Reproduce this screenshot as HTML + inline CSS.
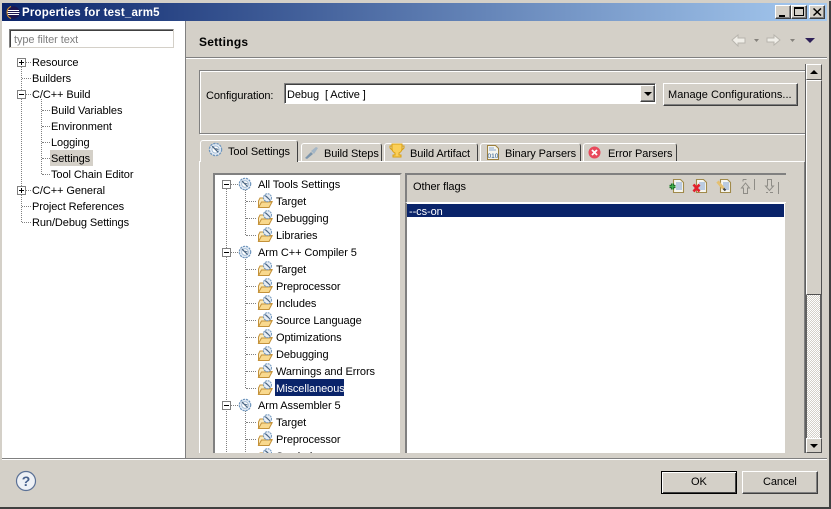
<!DOCTYPE html>
<html><head><meta charset="utf-8">
<style>
html,body{margin:0;padding:0;width:831px;height:509px;overflow:hidden;background:#d4d0c8}
body{position:relative;font:11px/13px "Liberation Sans",sans-serif;color:#000}
div,span,svg{position:absolute;box-sizing:border-box}
.t{white-space:nowrap;letter-spacing:-.08px;height:14px;line-height:14px;margin-top:1px}
.b{background:#d4d0c8;border:1px solid;border-color:#fff #404040 #404040 #fff;box-shadow:inset -1px -1px 0 #808080}
.tab{border:1px solid;border-color:#fff #404040 transparent #fff;border-bottom:0;border-radius:3px 3px 0 0;background:#d4d0c8}
.d{border-left:1px dotted #808080}
.h{border-top:1px dotted #808080;height:1px}
.x{width:9px;height:9px;border:1px solid #808080;background:#fff}
.x:before{content:"";position:absolute;left:1px;top:3px;width:5px;height:1px;background:#000}
.p:after{content:"";position:absolute;left:3px;top:1px;width:1px;height:5px;background:#000}
.tri{width:0;height:0;border-style:solid;border-width:4px 4px 0 4px;border-color:#000 transparent transparent transparent}
.triu{width:0;height:0;border-style:solid;border-width:0 4px 4px 4px;border-color:transparent transparent #000 transparent}
</style></head><body>
<svg width="0" height="0" style="left:0;top:0"><defs>
<symbol id="g" viewBox="0 0 16 16"><circle cx="8" cy="8" r="6.5" fill="#e6edf6" stroke="#6f96bd" stroke-width="1.4" stroke-dasharray="2.5 1"/><circle cx="8" cy="8" r="3.8" fill="#fff" stroke="#9db8d2"/><path d="M4.5 4.500L11 11" stroke="#4a6582" stroke-width="1.400"/><path d="M8 7l3 1" stroke="#4a6582"/></symbol>
<symbol id="f" viewBox="0 0 16 16"><path d="M1.500 8v6.500h10.500l3-6h-3V6H7.500L6.500 5H3z" fill="#fbe9b8" stroke="#c4923a"/><path d="M1.500 14.500l3-5.500h10.500l-3 5.500z" fill="#f9d98e" stroke="#c4923a"/><circle cx="10.500" cy="4.700" r="4" fill="#e6edf6" stroke="#6f96bd" stroke-dasharray="2 .7"/><path d="M8 2.500l5 4.500M9 3l3 3" stroke="#4a6582"/></symbol>
<symbol id="doc" viewBox="0 0 16 16"><path d="M4.500 1.500h7l3 3v10h-10z" fill="#f6f6f0" stroke="#a08a4a" stroke-width="1.100"/><path d="M7 5h6M7 7h6M7 9h6M7 11h6" stroke="#7ea0cf"/></symbol>
</defs></svg>

<!-- title -->
<div style="left:2px;top:3px;width:825px;height:18px;background:linear-gradient(90deg,#0a246a,#a6caf0)"></div>
<svg style="left:6px;top:5px" width="15" height="15" viewBox="0 0 15 15"><circle cx="7.500" cy="7.500" r="6.200" fill="#1c1650"/><path d="M2 5.500h11M1.500 7.500h12M2 9.500h11" stroke="#fff" stroke-width="1"/><path d="M5 1.500A6.500 6.500 0 0 0 5 13.500" stroke="#e09a30" fill="none"/></svg>
<div class="t" style="left:22px;top:5px;color:#fff;font-weight:bold;font-size:11.500px;letter-spacing:.2px">Properties for test_arm5</div>
<div class="b" style="left:775px;top:5px;width:16px;height:14px"><div style="left:3px;top:9px;width:6px;height:2px;background:#000"></div></div>
<div class="b" style="left:791px;top:5px;width:16px;height:14px"><div style="left:2px;top:1px;width:10px;height:9px;border:1px solid #000;border-top-width:2px"></div></div>
<div class="b" style="left:809px;top:5px;width:16px;height:14px"><svg style="left:3px;top:2px" width="9" height="8"><path d="M0.500 0.500L8 7.500M8 0.500L0.500 7.500" stroke="#000" stroke-width="1.500"/></svg></div>

<!-- left panel -->
<div style="left:2px;top:21px;width:183px;height:437px;background:#fff"></div>
<div style="left:185px;top:21px;width:1px;height:437px;background:#808080"></div>
<div style="left:9px;top:29px;width:165px;height:19px;background:#fff;border:1px solid;border-color:#808080 #d4d0c8 #d4d0c8 #808080;box-shadow:inset 1px 1px 0 #404040"></div>
<div class="t" style="left:14px;top:32px;color:#7f7f7f">type filter text</div>

<div class="d" style="left:21px;top:67px;height:155px"></div>
<div class="d" style="left:41px;top:99px;height:75px"></div>
<div class="h" style="left:26px;top:62px;width:5px"></div><div class="h" style="left:22px;top:78px;width:9px"></div><div class="h" style="left:26px;top:94px;width:5px"></div>
<div class="h" style="left:42px;top:110px;width:8px"></div><div class="h" style="left:42px;top:126px;width:8px"></div><div class="h" style="left:42px;top:142px;width:8px"></div><div class="h" style="left:42px;top:158px;width:8px"></div><div class="h" style="left:42px;top:174px;width:8px"></div>
<div class="h" style="left:26px;top:190px;width:5px"></div><div class="h" style="left:22px;top:206px;width:9px"></div><div class="h" style="left:22px;top:222px;width:9px"></div>
<div class="x p" style="left:17px;top:58px"></div><div class="x" style="left:17px;top:90px"></div><div class="x p" style="left:17px;top:186px"></div>
<div style="left:50px;top:150px;width:43px;height:16px;background:#d4d0c8"></div>
<div class="t" style="left:32px;top:55px">Resource</div>
<div class="t" style="left:32px;top:71px">Builders</div>
<div class="t" style="left:32px;top:87px">C/C++ Build</div>
<div class="t" style="left:51px;top:103px">Build Variables</div>
<div class="t" style="left:51px;top:119px">Environment</div>
<div class="t" style="left:51px;top:135px">Logging</div>
<div class="t" style="left:51px;top:151px">Settings</div>
<div class="t" style="left:51px;top:167px">Tool Chain Editor</div>
<div class="t" style="left:32px;top:183px">C/C++ General</div>
<div class="t" style="left:32px;top:199px">Project References</div>
<div class="t" style="left:32px;top:215px">Run/Debug Settings</div>

<!-- header -->
<div class="t" style="left:199px;top:34px;font-weight:bold;font-size:12px;letter-spacing:.25px">Settings</div>
<div style="left:186px;top:57px;width:641px;height:1px;background:#808080"></div>
<div style="left:186px;top:58px;width:641px;height:1px;background:#fff"></div>
<svg style="left:731px;top:33px" width="90" height="14" viewBox="0 0 90 14"><path d="M1 7l6-5v3h7v5H7v3z" fill="#f0eee8" stroke="#b8b5ae"/><path d="M36 5h7v-3l6 5-6 5v-3h-7z" fill="#f0eee8" stroke="#b8b5ae"/><path d="M23 6h5l-2.500 3z" fill="#85827c"/><path d="M59 6h5l-2.500 3z" fill="#85827c"/><path d="M74 5h10l-5 5z" fill="#2e2058"/></svg>

<!-- config group -->
<div style="left:199px;top:70px;width:607px;height:64px;border:1px solid #808080;box-shadow:1px 1px 0 #fff,inset 1px 1px 0 #fff"></div>
<div class="t" style="left:206px;top:88px">Configuration:</div>
<div style="left:284px;top:83px;width:372px;height:21px;background:#fff;border:1px solid;border-color:#808080 #fff #fff #808080;box-shadow:inset 1px 1px 0 #404040"></div>
<div class="t" style="left:287px;top:87px;white-space:pre">Debug  [ Active ]</div>
<div class="b" style="left:640px;top:85px;width:15px;height:17px"><div class="tri" style="left:3px;top:6px"></div></div>
<div class="b" style="left:663px;top:83px;width:135px;height:23px"></div>
<div class="t" style="left:668px;top:87px;letter-spacing:.03px">Manage Configurations...</div>

<!-- tab folder -->
<div style="left:199px;top:161px;width:607px;height:297px;border-top:1px solid #fff;border-left:1px solid #fff;border-right:2px solid #808080"></div>
<div class="tab" style="left:200px;top:140px;width:98px;height:22px"></div>
<div class="tab" style="left:301px;top:143px;width:81px;height:18px"></div>
<div class="tab" style="left:384px;top:143px;width:94px;height:18px"></div>
<div class="tab" style="left:480px;top:143px;width:101px;height:18px"></div>
<div class="tab" style="left:583px;top:143px;width:94px;height:18px"></div>
<svg style="left:208px;top:142px" width="15" height="15"><use href="#g"/></svg>
<div class="t" style="left:228px;top:144px">Tool Settings</div>
<svg style="left:304px;top:145px" width="15" height="15" viewBox="0 0 15 15"><path d="M1 13l6-6 2 2-6 5z" fill="#7d96ad"/><path d="M7 6l5-4 2 1-4 6z" fill="#a4b6c6"/></svg>
<div class="t" style="left:324px;top:146px">Build Steps</div>
<svg style="left:389px;top:143px" width="16" height="16" viewBox="0 0 16 16"><path d="M3 1h10v5a5 5 0 0 1-3 4v2h2v2H4v-2h2v-2a5 5 0 0 1-3-4z" fill="#fbcf58" stroke="#d9a013"/><path d="M3 3H1v2l2 2M13 3h2v2l-2 2" fill="none" stroke="#d9a013"/></svg>
<div class="t" style="left:410px;top:146px">Build Artifact</div>
<svg style="left:486px;top:145px" width="14" height="15" viewBox="0 0 14 15"><path d="M1.500.5h8l3 3v11h-11z" fill="#f5f5ee" stroke="#9c7f3c"/><path d="M3 3h5M3 5h7" stroke="#8aa6cf"/><text x="1.500" y="13" font-size="6.500" font-family="Liberation Sans" fill="#1f4f87">010</text></svg>
<div class="t" style="left:505px;top:146px">Binary Parsers</div>
<svg style="left:588px;top:146px" width="13" height="13" viewBox="0 0 13 13"><circle cx="6.500" cy="6.500" r="6" fill="#e84a5c"/><path d="M4 4l5 5M9 4l-5 5" stroke="#fff" stroke-width="1.800"/></svg>
<div class="t" style="left:608px;top:146px">Error Parsers</div>

<!-- tree box -->
<div style="left:213px;top:173px;width:189px;height:285px;background:#fff;border-top:2px solid #808080;border-left:2px solid #808080;border-right:2px solid #d4d0c8"></div>
<div class="d" style="left:226px;top:188px;height:270px"></div>
<div class="d" style="left:245px;top:188px;height:47px"></div>
<div class="d" style="left:245px;top:256px;height:132px"></div>
<div class="d" style="left:245px;top:409px;height:49px"></div>
<div class="h" style="left:231px;top:184px;width:7px"></div><div class="h" style="left:231px;top:252px;width:7px"></div><div class="h" style="left:231px;top:405px;width:7px"></div>
<div class="x" style="left:222px;top:180px"></div><div class="x" style="left:222px;top:248px"></div><div class="x" style="left:222px;top:401px"></div>
<svg style="left:238px;top:177px" width="14" height="14"><use href="#g"/></svg>
<svg style="left:238px;top:245px" width="14" height="14"><use href="#g"/></svg>
<svg style="left:238px;top:398px" width="14" height="14"><use href="#g"/></svg>
<div class="h" style="left:246px;top:201px;width:10px"></div><div class="h" style="left:246px;top:218px;width:10px"></div><div class="h" style="left:246px;top:235px;width:10px"></div>
<div class="h" style="left:246px;top:269px;width:10px"></div><div class="h" style="left:246px;top:286px;width:10px"></div><div class="h" style="left:246px;top:303px;width:10px"></div><div class="h" style="left:246px;top:320px;width:10px"></div><div class="h" style="left:246px;top:337px;width:10px"></div><div class="h" style="left:246px;top:354px;width:10px"></div><div class="h" style="left:246px;top:371px;width:10px"></div><div class="h" style="left:246px;top:388px;width:10px"></div>
<div class="h" style="left:246px;top:422px;width:10px"></div><div class="h" style="left:246px;top:439px;width:10px"></div>
<svg style="left:257px;top:193px" width="16" height="16"><use href="#f"/></svg>
<svg style="left:257px;top:210px" width="16" height="16"><use href="#f"/></svg>
<svg style="left:257px;top:227px" width="16" height="16"><use href="#f"/></svg>
<svg style="left:257px;top:261px" width="16" height="16"><use href="#f"/></svg>
<svg style="left:257px;top:278px" width="16" height="16"><use href="#f"/></svg>
<svg style="left:257px;top:295px" width="16" height="16"><use href="#f"/></svg>
<svg style="left:257px;top:312px" width="16" height="16"><use href="#f"/></svg>
<svg style="left:257px;top:329px" width="16" height="16"><use href="#f"/></svg>
<svg style="left:257px;top:346px" width="16" height="16"><use href="#f"/></svg>
<svg style="left:257px;top:363px" width="16" height="16"><use href="#f"/></svg>
<svg style="left:257px;top:380px" width="16" height="16"><use href="#f"/></svg>
<svg style="left:257px;top:414px" width="16" height="16"><use href="#f"/></svg>
<svg style="left:257px;top:431px" width="16" height="16"><use href="#f"/></svg>
<svg style="left:257px;top:448px" width="16" height="16"><use href="#f"/></svg>
<div style="left:275px;top:379px;width:69px;height:17px;background:#0a246a"></div>
<div class="t" style="left:258px;top:177px">All Tools Settings</div>
<div class="t" style="left:276px;top:194px">Target</div>
<div class="t" style="left:276px;top:211px">Debugging</div>
<div class="t" style="left:276px;top:228px">Libraries</div>
<div class="t" style="left:258px;top:245px">Arm C++ Compiler 5</div>
<div class="t" style="left:276px;top:262px">Target</div>
<div class="t" style="left:276px;top:279px">Preprocessor</div>
<div class="t" style="left:276px;top:296px">Includes</div>
<div class="t" style="left:276px;top:313px">Source Language</div>
<div class="t" style="left:276px;top:330px">Optimizations</div>
<div class="t" style="left:276px;top:347px">Debugging</div>
<div class="t" style="left:276px;top:364px">Warnings and Errors</div>
<div class="t" style="left:276px;top:381px;color:#fff">Miscellaneous</div>
<div class="t" style="left:258px;top:398px">Arm Assembler 5</div>
<div class="t" style="left:276px;top:415px">Target</div>
<div class="t" style="left:276px;top:432px">Preprocessor</div>
<div class="t" style="left:276px;top:449px">Symbols</div>

<!-- flags panel -->
<div style="left:405px;top:173px;width:381px;height:30px;border-top:2px solid #808080;border-left:2px solid #808080;border-bottom:1px solid #fff;background:#d4d0c8"></div>
<div style="left:405px;top:203px;width:381px;height:255px;background:#fff;border-left:2px solid #808080;border-right:1px solid #d4d0c8"></div>
<div class="t" style="left:413px;top:179px">Other flags</div>
<div style="left:407px;top:204px;width:377px;height:13px;background:#0a246a"></div>
<div class="t" style="left:409px;top:204px;color:#fff;height:13px;line-height:14px">--cs-on</div>
<svg style="left:669px;top:178px" width="16" height="16"><use href="#doc"/><path d="M3.500 5.500v6M.5 8.500h6" stroke="#14501f" stroke-width="3.200"/><path d="M3.500 5.500v6M.5 8.500h6" stroke="#3fae4a" stroke-width="1.600"/></svg>
<svg style="left:692px;top:178px" width="16" height="16"><use href="#doc"/><path d="M1.500 6.500l6 7M7.500 6.500l-6 7" stroke="#e3202c" stroke-width="2.600"/></svg>
<svg style="left:716px;top:178px" width="16" height="16"><use href="#doc"/><path d="M1.500 3.500L7.500 10.500" stroke="#e5c070" stroke-width="3"/><path d="M7.500 10.500l2 2" stroke="#404040" stroke-width="2"/></svg>
<svg style="left:740px;top:178px" width="17" height="17" viewBox="0 0 17 17" fill="none" stroke="#8e8c86"><path d="M5.500 5L1.500 10H3.500V15.500H7.500V10H9.500Z"/><path d="M3 1.500H6.500M3 1.500V3.500"/><path d="M14.500 1V12"/></svg>
<svg style="left:764px;top:178px" width="17" height="17" viewBox="0 0 17 17" fill="none" stroke="#8e8c86"><path d="M3.500 1.500H7.500V8H9.500L5.500 12.500L1.500 8H3.500Z"/><path d="M2 14.500H4M6 14.500H9"/><path d="M14.500 4V16"/></svg>

<!-- scrollbar -->
<div style="left:805px;top:64px;width:17px;height:389px;border:2px solid #606060;border-top:0;background:conic-gradient(#fff 25%,#d4d0c8 0 50%,#fff 0 75%,#d4d0c8 0) 0 0/2px 2px"></div>
<div style="left:806px;top:64px;width:16px;height:16px;background:#d4d0c8;border:1px solid;border-color:#fff #505050 #505050 #fff"><div class="triu" style="left:3px;top:5px"></div></div>
<div style="left:806px;top:80px;width:16px;height:215px;background:#d4d0c8;border:1px solid;border-color:#fff #505050 #505050 #fff"></div>
<div style="left:806px;top:438px;width:16px;height:15px;background:#d4d0c8;border:1px solid;border-color:#fff #505050 #505050 #fff"><div class="tri" style="left:3px;top:5px"></div></div>

<!-- footer -->
<div style="left:186px;top:453px;width:619px;height:5px;background:#d4d0c8"></div>
<div style="left:805px;top:453px;width:22px;height:5px;background:#d4d0c8"></div>
<div style="left:2px;top:458px;width:825px;height:1px;background:#808080"></div>
<div style="left:2px;top:459px;width:825px;height:1px;background:#fff"></div>
<div style="left:0;top:460px;width:831px;height:49px;background:#d4d0c8"></div>
<svg style="left:15px;top:470px" width="22" height="22" viewBox="0 0 22 22"><circle cx="11" cy="11" r="9.500" fill="#eef1f6" stroke="#5a7096" stroke-width="1.200"/><text x="11" y="16" text-anchor="middle" font-family="Liberation Sans" font-size="14" font-weight="bold" fill="#46608c">?</text></svg>
<div class="b" style="left:661px;top:471px;width:76px;height:23px;border:1px solid #000;box-shadow:inset 1px 1px 0 #fff,inset -1px -1px 0 #404040"></div>
<div class="t" style="left:691px;top:474px">OK</div>
<div class="b" style="left:742px;top:471px;width:76px;height:23px"></div>
<div class="t" style="left:763px;top:474px">Cancel</div>
<div style="left:0;top:507px;width:831px;height:2px;background:#404040"></div>
<div style="left:829px;top:0;width:2px;height:509px;background:#404040"></div>
<div style="left:0;top:0;width:831px;height:1px;background:#d4d0c8"></div>
</body></html>
